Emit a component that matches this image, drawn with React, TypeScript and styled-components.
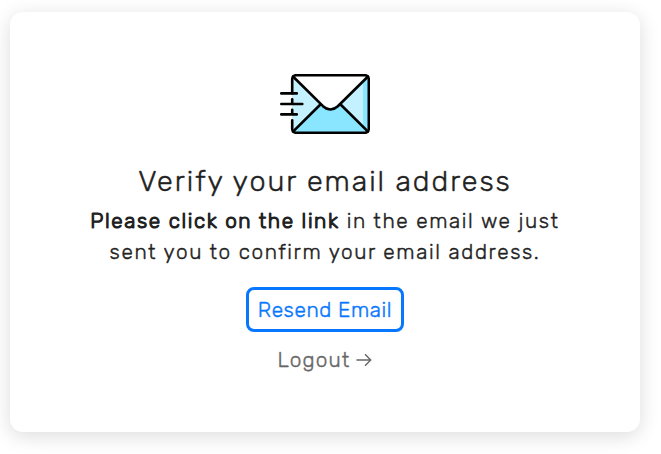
import React from "react";
import styled, { createGlobalStyle } from "styled-components";

const GlobalStyle = createGlobalStyle`
  * { box-sizing: border-box; }
  body { margin: 0; background: #fff; font-family: Rubik, Roboto, sans-serif; color: #212529; overflow: hidden; }
`;

const Page = styled.main`
  height: 454px;
  padding: 12px 21px 22px 10px;
`;

const Card = styled.section`
  height: 420px;
  padding-top: 62px;
  border-radius: 13px;
  background: #fff;
  box-shadow: 0 4px 20px rgba(0, 0, 0, 0.14);
  display: flex;
  flex-direction: column;
  align-items: center;
  -webkit-text-stroke: 0.42px currentColor;
`;

const MailIcon = styled.svg`
  display: block;
  width: 90px;
  height: 60px;
  flex: none;
`;

const Title = styled.h1`
  margin: 29px 0 0;
  font-size: 28.8px;
  font-weight: 300;
  line-height: 36px;
  letter-spacing: 1.96px;
  color: #212121;
  white-space: nowrap;
`;

const Message = styled.p`
  margin: 7px 0 0;
  font-size: 20.8px;
  font-weight: 300;
  line-height: 31px;
  letter-spacing: 1.61px;
  text-align: center;
  color: #212121;
  white-space: nowrap;
`;

const Line = styled.span`
  display: block;
`;

const Emphasis = styled.strong`
  font-weight: 300;
  letter-spacing: 1.6px;
  -webkit-text-stroke: 1.1px currentColor;
`;

const ResendButton = styled.button`
  width: 158px;
  height: 45px;
  margin-top: 19px;
  padding: 0;
  border: 3px solid #0677fe;
  border-radius: 8px;
  background: #fff;
  color: #0677fe;
  font: 300 20.8px/36px Rubik, Roboto, sans-serif;
  letter-spacing: 0.62px;
  white-space: nowrap;
  -webkit-text-stroke: 0.42px currentColor;
`;

const LogoutLink = styled.a`
  display: flex;
  align-items: center;
  gap: 6px;
  margin-top: 13px;
  font-size: 20.8px;
  font-weight: 300;
  line-height: 30px;
  letter-spacing: 1.15px;
  color: #666;
`;

const Arrow = styled.svg`
  display: block;
  width: 16px;
  height: 14px;
`;

export default function App() {
  return (
    <>
      <GlobalStyle />
      <Page>
        <Card>
          <MailIcon viewBox="0 0 90 60" fill="none" aria-hidden="true">
            <rect x="12" y="1.2" width="76.8" height="57.6" rx="3" fill="#c4f1ff" />
            <path d="M83 5h5v50h-5z" fill="#8ae6ff" />
            <path d="M13 58 40.5 31.5 50 35 60.5 31.5 88 58z" fill="#8ae6ff" />
            <path d="M13 2h75L58 32Q50 39 43 32z" fill="#fff" />
            <g stroke="#000" strokeWidth="2.6" strokeLinecap="round" strokeLinejoin="round">
              <path d="M12.2 19.4V5.2a4 4 0 0 1 4-4h68.6a4 4 0 0 1 4 4v49.6a4 4 0 0 1-4 4H16.2a4 4 0 0 1-4-4V46.3" />
              <path d="M12.2 25.3V30M12.2 35.7v4.7M1.3 19.4h15.5M1.3 30h21M1.3 40.4h15.5" />
              <path d="m13 2.5 30 29.7q7.3 6.6 14.8 0L88 2.5M13 57.7l27.4-27.2M88 57.7 60.6 30.5" />
            </g>
          </MailIcon>
          <Title>Verify your email address</Title>
          <Message>
            <Line>
              <Emphasis>Please click on the link</Emphasis> in the email we just
            </Line>
            <Line>sent you to confirm your email address.</Line>
          </Message>
          <ResendButton type="button">Resend Email</ResendButton>
          <LogoutLink>
            Logout
            <Arrow viewBox="0 0 16 14" fill="none" stroke="#666" strokeWidth="1.4" aria-hidden="true">
              <path d="M.5 7h14M9 1.3 14.7 7 9 12.7" />
            </Arrow>
          </LogoutLink>
        </Card>
      </Page>
    </>
  );
}
